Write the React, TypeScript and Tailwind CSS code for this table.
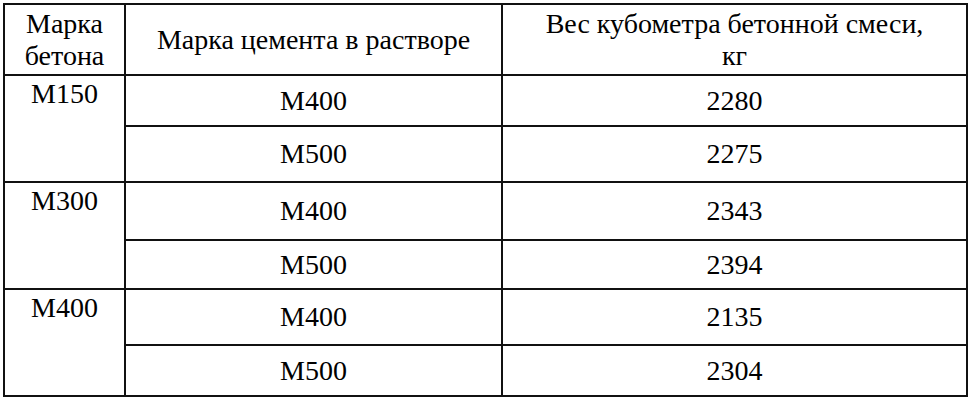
import React from "react";

const groups = [
  {
    grade: "М150",
    rows: [
      { cement: "М400", weight: "2280", h: "h-[51px]" },
      { cement: "М500", weight: "2275", h: "h-[56px]" },
    ],
  },
  {
    grade: "М300",
    rows: [
      { cement: "М400", weight: "2343", h: "h-[58px]" },
      { cement: "М500", weight: "2394", h: "h-[49px]" },
    ],
  },
  {
    grade: "М400",
    rows: [
      { cement: "М400", weight: "2135", h: "h-[56px]" },
      { cement: "М500", weight: "2304", h: "h-[51px]" },
    ],
  },
];

const cell =
  "border-2 border-[#111] p-0 text-center align-middle font-normal text-[28px] leading-[32px] font-['Liberation_Serif']";

const App = () => {
  return (
    <div className="w-[972px] h-[400px] bg-white pl-[3px] pt-[3px] overflow-hidden font-['Liberation_Serif']">
      <table className="table-fixed border-collapse w-[963px] text-black font-['Liberation_Serif']">
        <colgroup>
          <col className="w-[121px]" />
          <col className="w-[377px]" />
          <col className="w-[465px]" />
        </colgroup>
        <thead>
          <tr className="h-[71px]">
            <th className={cell}>
              Марка
              <br />
              бетона
            </th>
            <th className={cell}>Марка цемента в растворе</th>
            <th className={cell}>
              Вес кубометра бетонной смеси,
              <br />
              кг
            </th>
          </tr>
        </thead>
        <tbody>
          {groups.map((g) =>
            g.rows.map((r, i) => (
              <tr key={g.grade + i} className={r.h}>
                {i === 0 && (
                  <td
                    rowSpan={2}
                    className="border-2 border-[#111] p-0 pt-[2px] text-center align-top text-[28px] leading-[32px] font-['Liberation_Serif']"
                  >
                    {g.grade}
                  </td>
                )}
                <td className={cell}>{r.cement}</td>
                <td className={cell}>{r.weight}</td>
              </tr>
            ))
          )}
        </tbody>
      </table>
    </div>
  );
};

export default App;
